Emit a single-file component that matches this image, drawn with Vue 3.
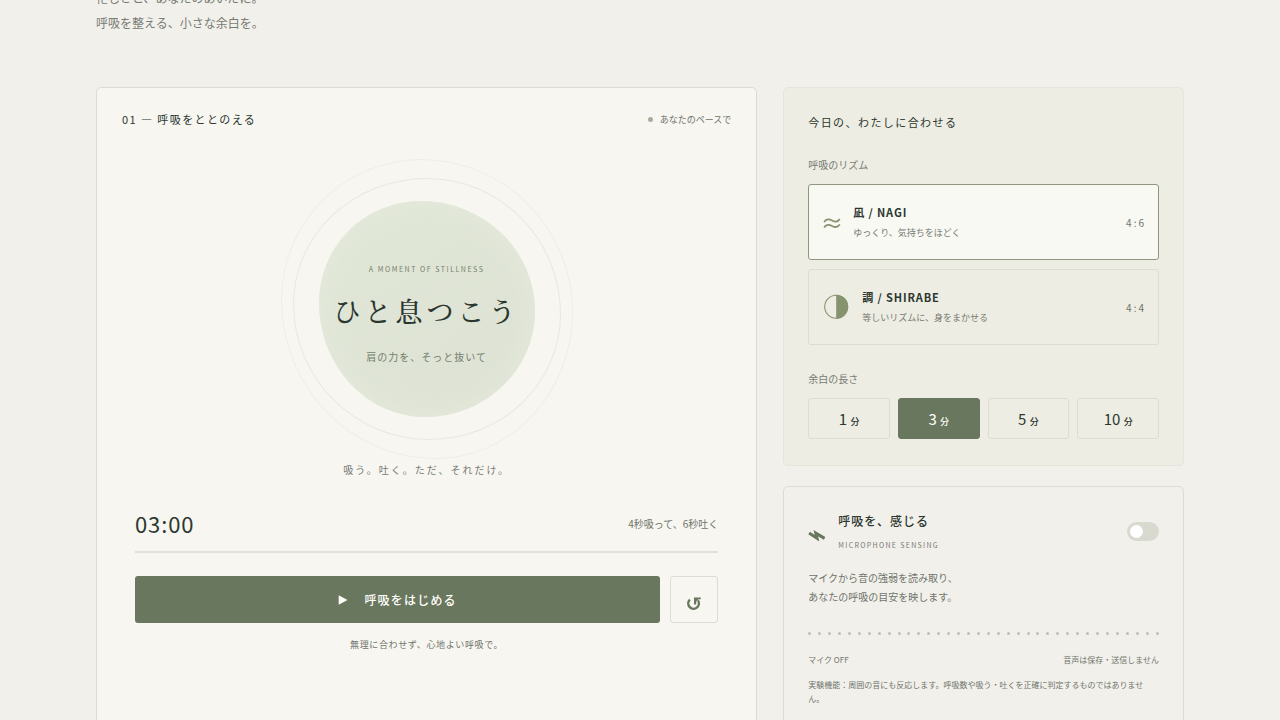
<script setup>
import { ref, computed } from 'vue'

const rhythms = [
  { id: 'nagi', name: '凪 / NAGI', text: 'ゆっくり、気持ちをほどく', ratio: '4:6', hint: '4秒吸って、6秒吐く' },
  { id: 'shirabe', name: '調 / SHIRABE', text: '等しいリズムに、身をまかせる', ratio: '4:4', hint: '4秒吸って、4秒吐く' },
]
const lengths = [1, 3, 5, 10]

const rhythm = ref('nagi')
const minutes = ref(3)
const mic = ref(false)

const hint = computed(() => rhythms.find((r) => r.id === rhythm.value).hint)
const clock = computed(() => String(minutes.value).padStart(2, '0') + ':00')
</script>

<template>
  <div class="page" lang="ja">
    <header class="intro">
      <p>忙しさと、あなたのあいだに。<br />呼吸を整える、小さな余白を。</p>
    </header>

    <main class="layout">
      <section class="card session">
        <div class="session-head">
          <h2 class="title">01 — 呼吸をととのえる</h2>
          <span class="pace"><i class="dot"></i>あなたのペースで</span>
        </div>

        <div class="stage">
          <div class="ring outer"></div>
          <div class="ring inner"></div>
          <div class="orb">
            <span class="orb-label">A MOMENT OF STILLNESS</span>
            <strong class="orb-title">ひと息つこう</strong>
            <span class="orb-text">肩の力を、そっと抜いて</span>
          </div>
        </div>
        <p class="caption">吸う。吐く。ただ、それだけ。</p>

        <div class="controls">
          <div class="timer">
            <span class="clock">{{ clock }}</span>
            <span class="hint">{{ hint }}</span>
          </div>
          <div class="track"></div>
          <div class="actions">
            <button class="start" type="button">
              <svg width="10" height="10" viewBox="0 0 10 10" aria-hidden="true"><path d="M0.7 0.3 9.5 5 0.7 9.7z" fill="currentColor" /></svg>
              <span>呼吸をはじめる</span>
            </button>
            <button class="reset" type="button" aria-label="リセット">
              <svg width="14" height="14" viewBox="0 0 14 14" aria-hidden="true">
                <path d="M2.9 2.6A5.3 5.3 0 1 0 10.9 3.4" fill="none" stroke="currentColor" stroke-width="2.4" />
                <path d="M7 0.6H13.8V2.2H11.6L9.2 4.4V7.4H7z" fill="currentColor" />
              </svg>
            </button>
          </div>
          <p class="note">無理に合わせず、心地よい呼吸で。</p>
        </div>
      </section>

      <div class="side">
        <section class="card settings">
          <h2 class="title">今日の、わたしに合わせる</h2>

          <p class="label">呼吸のリズム</p>
          <div class="rhythms">
            <button
              v-for="r in rhythms"
              :key="r.id"
              type="button"
              class="rhythm"
              :class="{ active: rhythm === r.id }"
              :aria-pressed="rhythm === r.id"
              @click="rhythm = r.id"
            >
              <svg v-if="r.id === 'nagi'" class="glyph" width="18" height="16" viewBox="0 0 18 16" aria-hidden="true">
                <path d="M1.2 8.2C3.2 4.6 5.8 4.8 9 6.5S14.8 8.4 16.8 5M1.2 13.6C3.2 10 5.8 10.2 9 11.9S14.8 13.8 16.8 10.4" fill="none" stroke="currentColor" stroke-width="1.7" />
              </svg>
              <svg v-else class="glyph" width="27" height="26" viewBox="0 0 27 26" aria-hidden="true">
                <circle cx="13.2" cy="12.7" r="11.5" fill="none" stroke="currentColor" stroke-width="1.1" />
                <path d="M13.2 0.7a12 12 0 0 1 0 24z" fill="currentColor" />
              </svg>
              <span class="rhythm-body">
                <b>{{ r.name }}</b>
                <small>{{ r.text }}</small>
              </span>
              <span class="ratio">{{ r.ratio }}</span>
            </button>
          </div>

          <p class="label second">余白の長さ</p>
          <div class="lengths">
            <button
              v-for="n in lengths"
              :key="n"
              type="button"
              class="length"
              :class="{ active: minutes === n }"
              :aria-pressed="minutes === n"
              @click="minutes = n"
            >{{ n }} <small>分</small></button>
          </div>
        </section>

        <section class="card sensing">
          <div class="sensing-head">
            <span class="bolt">
              <svg width="18" height="20" viewBox="0 0 18 20" aria-hidden="true">
                <path d="M1.1 11.9 9 17.2 7.8 12.2 16.6 17.4" fill="none" stroke="currentColor" stroke-width="3" />
              </svg>
            </span>
            <div class="sensing-title">
              <label for="mic">呼吸を、感じる</label>
              <small>MICROPHONE SENSING</small>
            </div>
            <input id="mic" v-model="mic" class="switch" type="checkbox" role="switch" />
          </div>
          <p class="about">マイクから音の強弱を読み取り、<br />あなたの呼吸の目安を映します。</p>
          <div class="level"><i v-for="n in 36" :key="n"></i></div>
          <div class="status">
            <span>マイク {{ mic ? 'ON' : 'OFF' }}</span>
            <span>音声は保存・送信しません</span>
          </div>
          <p class="fine">実験機能：周囲の音にも反応します。呼吸数や吸う・吐くを正確に判定するものではありません。</p>
        </section>
      </div>
    </main>
  </div>
</template>

<style>
body {
  background: #f2f0eb;
}
</style>

<style scoped>
* {
  box-sizing: border-box;
}
.page {
  height: 100vh;
  overflow: hidden;
  padding: 0 96px;
  background: #f2f0eb;
  color: #2c3730;
  font-family: "Noto Sans CJK JP", sans-serif;
  font-size: 10px;
}
p,
h2 {
  margin: 0;
}
button {
  font-family: inherit;
  color: inherit;
  cursor: pointer;
}
.intro {
  display: flex;
  align-items: flex-end;
  height: 35px;
  overflow: hidden;
  color: #777b74;
}
.intro p {
  font-size: 12px;
  line-height: 25px;
}
.layout {
  display: grid;
  grid-template-columns: 1.65fr 1fr;
  gap: 26px;
  margin-top: 52px;
}
.card {
  border: 1px solid #dcdcd5;
  border-radius: 5px;
}
.title {
  font-size: 11px;
  font-weight: 400;
  line-height: 20px;
  letter-spacing: 0.13em;
}

/* Session */
.session {
  padding: 21px 25px 80px;
  background: #f7f6f1;
}
.session-head {
  display: flex;
  justify-content: space-between;
  align-items: center;
}
.pace {
  display: flex;
  align-items: center;
  gap: 7px;
  font-size: 9px;
  color: #6f756c;
}
.dot {
  width: 5px;
  height: 5px;
  border-radius: 50%;
  background: #a5ad9a;
}
.stage {
  display: grid;
  place-items: center;
  height: 300px;
  margin-top: 30px;
}
.stage > * {
  grid-area: 1 / 1;
}
.ring {
  border: 1px solid #e8e8e2;
}
.ring.outer {
  width: 292px;
  height: 300px;
  border-radius: 48% 52% 47% 53% / 47% 51% 49% 53%;
  border-color: #eeeee9;
}
.ring.inner {
  width: 268px;
  height: 262px;
  border-radius: 50% 50% 49% 51% / 48% 52% 48% 52%;
}
.orb {
  display: flex;
  flex-direction: column;
  align-items: center;
  width: 216px;
  height: 216px;
  padding-top: 62px;
  border-radius: 47% 53% 51% 49% / 47% 51% 49% 53%;
  background: linear-gradient(145deg, #e1e7d7, #dde2d4);
  box-shadow: inset 0 0 30px #e5eadc;
}
.orb-label {
  font-size: 7px;
  line-height: 12px;
  letter-spacing: 0.22em;
  white-space: nowrap;
  color: #74806c;
}
.orb-title {
  margin-top: 16px;
  font-family: "Noto Serif CJK JP", "Noto Serif JP", serif;
  font-size: 27px;
  font-weight: 500;
  line-height: 40px;
  letter-spacing: 4px;
  white-space: nowrap;
}
.orb-text {
  margin-top: 18px;
  line-height: 16px;
  letter-spacing: 0.1em;
  color: #74806c;
}
.caption {
  margin-top: 3px;
  line-height: 16px;
  letter-spacing: 0.2em;
  text-align: center;
  color: #777b74;
}
.controls {
  margin: 29px 13px 0;
}
.timer {
  display: flex;
  justify-content: space-between;
  align-items: center;
  height: 32px;
}
.clock {
  font-size: 22px;
  line-height: 32px;
  letter-spacing: 0.04em;
}
.hint {
  color: #6f756c;
}
.track {
  height: 2px;
  margin-top: 12px;
  background: #e1e1da;
}
.actions {
  display: flex;
  gap: 10px;
  margin-top: 23px;
}
.start {
  flex: 1;
  display: flex;
  justify-content: center;
  align-items: center;
  gap: 16px;
  height: 47px;
  border: 0;
  border-radius: 3px;
  background: #69775f;
  color: #fffefa;
  font-size: 12px;
  font-weight: 500;
  letter-spacing: 0.1em;
}
.reset {
  display: flex;
  justify-content: center;
  align-items: center;
  width: 48px;
  height: 47px;
  padding: 8px 0 0;
  border: 1px solid #dcdcd5;
  border-radius: 3px;
  background: transparent;
  color: #69775f;
}
.note {
  margin-top: 14px;
  font-size: 9px;
  line-height: 16px;
  letter-spacing: 0.07em;
  text-align: center;
  color: #6f756c;
}

/* Settings */
.side {
  display: flex;
  flex-direction: column;
  gap: 20px;
}
.settings {
  padding: 24px 24px 26px;
  background: #edede3;
  border-color: #e5e5dc;
}
.label {
  margin-top: 25px;
  line-height: 16px;
  color: #777b74;
}
.label.second {
  margin-top: 26px;
}
.rhythms {
  display: grid;
  gap: 9px;
  margin-top: 11px;
}
.rhythm {
  display: flex;
  align-items: center;
  gap: 12px;
  height: 76px;
  padding: 0 12px 0 14px;
  border: 1px solid #dcdcd2;
  border-radius: 3px;
  background: transparent;
  text-align: left;
}
.rhythm.active {
  border-color: #8f967f;
  background: #f8f9f3;
}
.glyph {
  flex: none;
  color: #87936f;
}
.rhythm-body {
  flex: 1;
  display: grid;
  gap: 4px;
}
.rhythm-body b {
  font-size: 11px;
  font-weight: 600;
  line-height: 18px;
  letter-spacing: 0.08em;
}
.rhythm-body small {
  font-size: 9px;
  line-height: 16px;
  color: #777b74;
}
.ratio {
  font-size: 10px;
  letter-spacing: 0.2em;
  color: #6f756c;
}
.lengths {
  display: grid;
  grid-template-columns: repeat(4, 1fr);
  gap: 8px;
  margin-top: 11px;
}
.length {
  height: 41px;
  padding: 0;
  border: 1px solid #dcdcd2;
  border-radius: 3px;
  background: transparent;
  font-size: 15px;
}
.length small {
  font-size: 9px;
  font-weight: 500;
}
.length.active {
  border-color: #69775f;
  background: #69775f;
  color: #fffefa;
}

/* Microphone sensing */
.sensing {
  padding: 24px 24px 40px;
}
.sensing-head {
  display: flex;
  align-items: center;
}
.bolt {
  display: flex;
  width: 30px;
  color: #69775f;
}
.sensing-title {
  flex: 1;
  display: grid;
  gap: 8px;
}
.sensing-title label {
  font-size: 12px;
  font-weight: 500;
  line-height: 20px;
  letter-spacing: 0.08em;
}
.sensing-title small {
  font-size: 7px;
  line-height: 12px;
  letter-spacing: 0.19em;
  color: #777b74;
}
.switch {
  appearance: none;
  display: flex;
  width: 32px;
  height: 19px;
  margin: 0;
  padding: 3px;
  border-radius: 10px;
  background: #d8dacf;
  cursor: pointer;
}
.switch::before {
  content: "";
  width: 13px;
  height: 13px;
  border-radius: 50%;
  background: #fff;
}
.switch:checked {
  justify-content: flex-end;
  background: #69775f;
}
.about {
  margin-top: 17px;
  line-height: 19px;
  color: #6f756c;
}
.level {
  display: flex;
  justify-content: space-between;
  margin-top: 26px;
}
.level i {
  width: 3px;
  height: 3px;
  border-radius: 50%;
  background: #bcc0b5;
}
.status {
  display: flex;
  justify-content: space-between;
  margin-top: 17px;
  font-size: 8px;
  line-height: 16px;
  color: #6f756c;
}
.fine {
  margin-top: 10px;
  font-size: 8px;
  line-height: 14px;
  color: #6f756c;
}
</style>
